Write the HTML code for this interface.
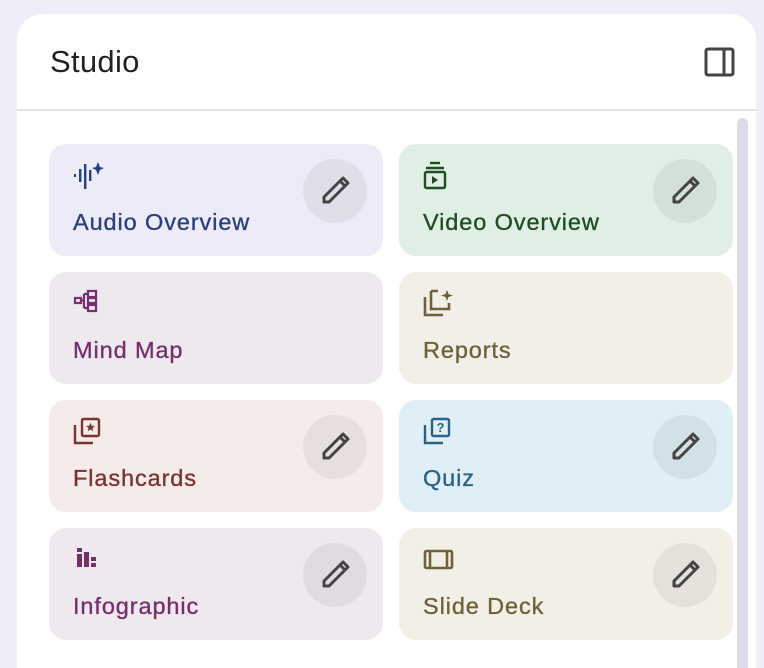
<!DOCTYPE html>
<html style="width:764px;height:668px;overflow:hidden"><head><style>
body{margin:0;width:764px;height:668px;background:#eeeef8;font-family:"Liberation Sans",sans-serif;overflow:hidden;position:relative}
.panel{position:absolute;left:17px;top:14px;width:739px;height:680px;background:#fff;border-radius:26px}
.title{position:absolute;left:50px;top:44px;font-size:31px;letter-spacing:0.3px;color:#222}
.hline{position:absolute;left:17px;top:109px;width:739px;height:2px;background:#e2e2e4}
.sb{position:absolute;left:737px;top:118px;width:11px;height:560px;background:#dcdce6;border-radius:6px}
.card{position:absolute;width:334px;height:112px;border-radius:17px}
.card svg.ic{position:absolute;left:24px;top:17px}
.card .t{position:absolute;left:24px;top:65px;font-size:23.5px;letter-spacing:0.9px;-webkit-text-stroke:0.35px currentColor}
.pen{position:absolute;left:254px;top:15px;width:64px;height:64px;border-radius:50%;background:rgba(0,0,0,0.055)}
.pen svg{position:absolute;left:16px;top:16px}
</style></head><body>
<div class="panel"></div>
<div class="title">Studio</div>
<svg style="position:absolute;left:704px;top:47px" width="32" height="30" viewBox="0 0 32 30"><rect x="2" y="2" width="27" height="26" rx="2" fill="none" stroke="#444" stroke-width="3"/><line x1="20" y1="2" x2="20" y2="28" stroke="#444" stroke-width="3"/></svg>
<div class="hline"></div>
<div class="sb"></div>

<div class="card" style="left:49px;top:144px;background:#ececf8;color:#2b3f7f">
<svg class="ic" width="32" height="30" viewBox="0 0 32 30" fill="#2b3f7f"><rect x="1" y="13" width="2" height="3"/><rect x="6" y="8" width="2.4" height="13"/><rect x="11" y="3" width="2.4" height="25"/><rect x="16" y="9" width="2.4" height="11"/><path d="M25 1 L27 6 L31 7 L27 9 L25 14 L23 9 L19 7 L23 6Z"/></svg>
<div class="t">Audio Overview</div>
<div class="pen"><svg width="32" height="32" viewBox="0 0 32 32"><path d="M5 27 L5 22 L21 6 L26 11 L10 27Z M21 6 L24 3 L29 8 L26 11" fill="none" stroke="#444" stroke-width="3" stroke-linejoin="round"/></svg></div>
</div>

<div class="card" style="left:399px;top:144px;background:#e0efe3;color:#1f4d24">
<svg class="ic" width="30" height="30" viewBox="0 0 30 30" fill="none" stroke="#1f4d24" stroke-width="2.4"><line x1="7" y1="2" x2="17" y2="2"/><line x1="3" y1="7" x2="21" y2="7"/><rect x="2" y="11" width="20" height="16" rx="1.5"/><path d="M9 15 L15 19 L9 23Z" fill="#1f4d24" stroke="none"/></svg>
<div class="t">Video Overview</div>
<div class="pen"><svg width="32" height="32" viewBox="0 0 32 32"><path d="M5 27 L5 22 L21 6 L26 11 L10 27Z M21 6 L24 3 L29 8 L26 11" fill="none" stroke="#444" stroke-width="3" stroke-linejoin="round"/></svg></div>
</div>

<div class="card" style="left:49px;top:272px;background:#eee8ef;color:#76306f">
<svg class="ic" width="32" height="30" viewBox="0 0 32 30" fill="none" stroke="#76306f" stroke-width="2.2"><rect x="2" y="9" width="6" height="5"/><rect x="15" y="2" width="8" height="6"/><rect x="15" y="9" width="8" height="5"/><rect x="15" y="16" width="8" height="6"/><path d="M8 11.5 H11 M11 5 V19 M11 5 H15 M11 19 H15"/></svg>
<div class="t">Mind Map</div>
</div>

<div class="card" style="left:399px;top:272px;background:#f1efe8;color:#6f6238">
<svg class="ic" width="32" height="30" viewBox="0 0 32 30" fill="none" stroke="#6f6238" stroke-width="2.6"><path d="M2 8 V26 H20"/><path d="M8 2 V20 H26 V14 M8 2 H15"/><path d="M24 1 L25.5 5 L30 6.5 L25.5 8 L24 12 L22.5 8 L18 6.5 L22.5 5Z" fill="#6f6238" stroke="none"/></svg>
<div class="t">Reports</div>
</div>

<div class="card" style="left:49px;top:400px;background:#f5ece9;color:#7a3330">
<svg class="ic" width="30" height="30" viewBox="0 0 30 30" fill="none" stroke="#7a3330" stroke-width="2.4"><path d="M2 8 V26 H20"/><rect x="9" y="2" width="17" height="17" rx="1.5"/><path d="M17.5 5.5 L18.7 8.7 L22 9 L19.5 11 L20.3 14.3 L17.5 12.5 L14.7 14.3 L15.5 11 L13 9 L16.3 8.7Z" fill="#7a3330" stroke="none"/></svg>
<div class="t">Flashcards</div>
<div class="pen"><svg width="32" height="32" viewBox="0 0 32 32"><path d="M5 27 L5 22 L21 6 L26 11 L10 27Z M21 6 L24 3 L29 8 L26 11" fill="none" stroke="#444" stroke-width="3" stroke-linejoin="round"/></svg></div>
</div>

<div class="card" style="left:399px;top:400px;background:#dfeff5;color:#2b6287">
<svg class="ic" width="30" height="30" viewBox="0 0 30 30" fill="none" stroke="#2b6287" stroke-width="2.4"><path d="M2 8 V26 H20"/><rect x="9" y="2" width="17" height="17" rx="1.5"/><text x="17.5" y="15" font-size="13" font-family="Liberation Sans" font-weight="bold" text-anchor="middle" fill="#2b6287" stroke="none">?</text></svg>
<div class="t">Quiz</div>
<div class="pen"><svg width="32" height="32" viewBox="0 0 32 32"><path d="M5 27 L5 22 L21 6 L26 11 L10 27Z M21 6 L24 3 L29 8 L26 11" fill="none" stroke="#444" stroke-width="3" stroke-linejoin="round"/></svg></div>
</div>

<div class="card" style="left:49px;top:528px;background:#efe8ef;color:#772f6c">
<svg class="ic" width="30" height="30" viewBox="0 0 30 30" fill="#772f6c"><rect x="4" y="3" width="5" height="4"/><rect x="4" y="9" width="5" height="13"/><rect x="11" y="7" width="5" height="15"/><rect x="18" y="12" width="5" height="4"/><rect x="18" y="18" width="5" height="4"/></svg>
<div class="t">Infographic</div>
<div class="pen"><svg width="32" height="32" viewBox="0 0 32 32"><path d="M5 27 L5 22 L21 6 L26 11 L10 27Z M21 6 L24 3 L29 8 L26 11" fill="none" stroke="#444" stroke-width="3" stroke-linejoin="round"/></svg></div>
</div>

<div class="card" style="left:399px;top:528px;background:#f1efe6;color:#6f6238">
<svg class="ic" width="32" height="30" viewBox="0 0 32 30" fill="none" stroke="#6f6238" stroke-width="2.6"><rect x="2" y="6" width="27" height="17" rx="1.5"/><line x1="7" y1="6" x2="7" y2="23"/><line x1="24" y1="6" x2="24" y2="23"/></svg>
<div class="t">Slide Deck</div>
<div class="pen"><svg width="32" height="32" viewBox="0 0 32 32"><path d="M5 27 L5 22 L21 6 L26 11 L10 27Z M21 6 L24 3 L29 8 L26 11" fill="none" stroke="#444" stroke-width="3" stroke-linejoin="round"/></svg></div>
</div>
</body></html>
